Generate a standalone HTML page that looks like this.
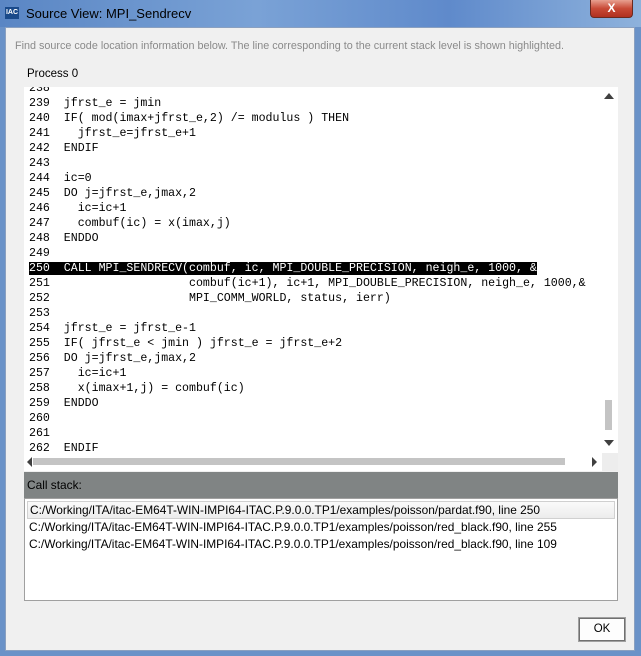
<!DOCTYPE html>
<html><head><meta charset="utf-8"><style>
*{margin:0;padding:0;box-sizing:border-box}
body{width:641px;height:656px;overflow:hidden;background:#6a92c8;font-family:"Liberation Sans",sans-serif;position:relative}
.tb{position:absolute;left:0;top:0;width:641px;height:27px;background:linear-gradient(90deg,#5a86c4,#7aa2d6 40%,#5f8acb 70%,#8eb2dc)}
.title{position:absolute;left:26px;top:6px;font-size:13px;color:#000}
.ico{position:absolute;left:5px;top:7px;width:14px;height:12px;background:#1a4a8a;color:#fff;font-size:7px;font-weight:bold;line-height:12px;text-align:center}
.x{position:absolute;left:590px;top:0;width:43px;height:18px;background:linear-gradient(#e8a090,#c84a36 50%,#b03020);border:1px solid #6a2a20;border-top:none;border-radius:0 0 4px 4px;color:#fff;font-weight:bold;font-size:12px;text-align:center;line-height:17px}
.inner{position:absolute;left:5px;top:27px;width:630px;height:624px;background:#f0f0f0;border:1px solid #8aa0c0}
.hint{position:absolute;left:15px;top:40px;font-size:10.8px;color:#8a8a8a}
.proc{position:absolute;left:27px;top:68px;font-size:11.5px;color:#000}
.code{position:absolute;left:24px;top:87px;width:594px;height:384px;background:#fff;overflow:hidden}
.lines{position:absolute;left:5px;top:-6px;font-family:"Liberation Mono",monospace;font-size:11.6px;line-height:15px;white-space:pre;color:#000}
.hl{background:#000;color:#fff}
.vthumb{position:absolute;left:581px;top:313px;width:7px;height:30px;background:#c4c4c4}
.hthumb{position:absolute;left:9px;top:371px;width:532px;height:7px;background:#c4c4c4}
.corner{position:absolute;left:578px;top:366px;width:16px;height:18px;background:#ededed}
.cs{position:absolute;left:24px;top:472px;width:594px;height:26px;background:#808484;font-size:11.9px;padding:6px 0 0 3px;color:#000}
.list{position:absolute;left:24px;top:498px;width:594px;height:103px;background:#fff;border:1px solid #a0a0a0;font-size:11.9px}
.row{height:17px;line-height:17px;padding-left:4px}
.sel{margin:2px 2px 0 2px;border:1px solid #d0d0d0;background:linear-gradient(#fafafa,#ececec);padding-left:2px;height:18px;line-height:16px}
.ok{position:absolute;left:579px;top:618px;width:46px;height:23px;border:1px solid #707070;background:#fdfdfd;outline:1px solid #a0a0a0;font-size:11.5px;text-align:center;line-height:21px}
</style></head><body>
<div class="tb"></div>
<div class="ico">IAC</div>
<div class="title">Source View: MPI_Sendrecv</div>
<div class="x">X</div>
<div class="inner"></div>
<div class="hint">Find source code location information below. The line corresponding to the current stack level is shown highlighted.</div>
<div class="proc">Process 0</div>
<div class="code">
<div class="lines">238
239  jfrst_e = jmin
240  IF( mod(imax+jfrst_e,2) /= modulus ) THEN
241    jfrst_e=jfrst_e+1
242  ENDIF
243
244  ic=0
245  DO j=jfrst_e,jmax,2
246    ic=ic+1
247    combuf(ic) = x(imax,j)
248  ENDDO
249
<span class="hl">250  CALL MPI_SENDRECV(combuf, ic, MPI_DOUBLE_PRECISION, neigh_e, 1000, &amp;</span>
251                    combuf(ic+1), ic+1, MPI_DOUBLE_PRECISION, neigh_e, 1000,&amp;
252                    MPI_COMM_WORLD, status, ierr)
253
254  jfrst_e = jfrst_e-1
255  IF( jfrst_e &lt; jmin ) jfrst_e = jfrst_e+2
256  DO j=jfrst_e,jmax,2
257    ic=ic+1
258    x(imax+1,j) = combuf(ic)
259  ENDDO
260
261
262  ENDIF</div>
<svg style="position:absolute;left:579px;top:5px" width="12" height="8"><path d="M1 7 L6 1 L11 7Z" fill="#404040"/></svg>
<svg style="position:absolute;left:579px;top:352px" width="12" height="8"><path d="M1 1 L6 7 L11 1Z" fill="#404040"/></svg>
<div class="vthumb"></div>
<div class="hthumb"></div>
<svg style="position:absolute;left:2px;top:369px" width="7" height="12"><path d="M6 1 L1 6 L6 11Z" fill="#404040"/></svg>
<svg style="position:absolute;left:567px;top:369px" width="7" height="12"><path d="M1 1 L6 6 L1 11Z" fill="#404040"/></svg>
<div class="corner"></div>
</div>
<div class="cs">Call stack:</div>
<div class="list">
<div class="row sel">C:/Working/ITA/itac-EM64T-WIN-IMPI64-ITAC.P.9.0.0.TP1/examples/poisson/pardat.f90, line 250</div>
<div class="row">C:/Working/ITA/itac-EM64T-WIN-IMPI64-ITAC.P.9.0.0.TP1/examples/poisson/red_black.f90, line 255</div>
<div class="row">C:/Working/ITA/itac-EM64T-WIN-IMPI64-ITAC.P.9.0.0.TP1/examples/poisson/red_black.f90, line 109</div>
</div>
<div class="ok">OK</div>
</body></html>
